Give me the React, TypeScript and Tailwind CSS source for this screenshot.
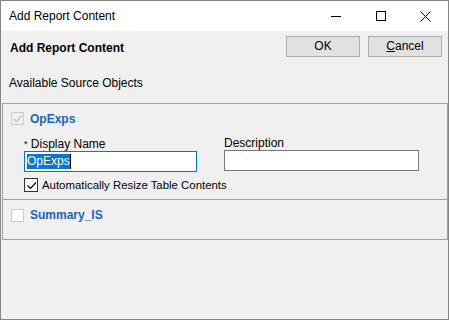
import React from "react";

const font = { fontFamily: '"Liberation Sans", Arial, sans-serif' };

const Check = ({ color }: { color: string }) => (
  <svg width="11" height="11" viewBox="0 0 11 11" fill="none">
    <path d="M1.5 5.5 L4.5 8.5 L10 2.5" stroke={color} strokeWidth="1.2" />
  </svg>
);

const App = () => {
  return (
    <div
      className="w-[449px] h-[320px] border border-[#858585] flex flex-col bg-[#f0f0f0] text-[12px] text-black overflow-hidden"
      style={font}
    >
      {/* title bar */}
      <div className="h-[30px] bg-white flex items-center">
        <div className="pl-[8px] flex-1 leading-[14px]">Add Report Content</div>
        <div className="flex h-full">
          <div className="w-[45px] flex items-center justify-center">
            <svg width="10" height="10" viewBox="0 0 10 10">
              <path d="M0 5.5 H10" stroke="#000" strokeWidth="1" />
            </svg>
          </div>
          <div className="w-[45px] flex items-center justify-center">
            <svg width="10" height="10" viewBox="0 0 10 10">
              <rect x="0.5" y="0.5" width="9" height="9" fill="none" stroke="#000" strokeWidth="1" />
            </svg>
          </div>
          <div className="w-[45px] flex items-center justify-center">
            <svg width="11" height="11" viewBox="0 0 11 11">
              <path d="M0.5 0.5 L10.5 10.5 M10.5 0.5 L0.5 10.5" stroke="#000" strokeWidth="1" />
            </svg>
          </div>
        </div>
      </div>

      {/* header */}
      <div className="flex items-start pt-[5px] pr-[6px]">
        <div className="flex-1 pl-[9px] pt-[5px] leading-[14px] font-bold">Add Report Content</div>
        <div className="flex gap-[8px]">
          <button className="w-[74px] h-[21px] bg-[#e1e1e1] border border-[#adadad] leading-[19px] text-center">
            OK
          </button>
          <button className="w-[74px] h-[21px] bg-[#e1e1e1] border border-[#adadad] leading-[19px] text-center">
            <span className="underline">C</span>ancel
          </button>
        </div>
      </div>

      <div className="pl-[8px] mt-[19px] leading-[14px]">Available Source Objects</div>

      {/* source objects panel */}
      <div className="ml-[1px] mt-[13px] h-[137px] border border-[#a0a0a0] flex flex-col">
        <div className="h-[96px] border-b border-[#a0a0a0] pt-[8px] flex flex-col">
          <div className="flex items-center h-[13px] pl-[8px]">
            <div className="w-[13px] h-[13px] border border-[#cccccc] bg-[#f0f0f0] flex items-center justify-center">
              <Check color="#c4c4c4" />
            </div>
            <span className="ml-[6px] font-bold text-[#1565c0] leading-[14px]">OpExps</span>
          </div>

          <div className="flex mt-[11px] pl-[21px]">
            <div className="w-[173px] mt-[1px] flex flex-col">
              <div className="leading-[14px]">
                <span className="text-[9px] align-top">*</span> Display Name
              </div>
              <div className="h-[21px] border border-[#0078d7] bg-white flex items-center pl-[2px]">
                <span className="bg-[#0078d7] text-white leading-[15px]">OpExps</span>
                <span className="w-[1px] h-[15px] bg-black" />
              </div>
            </div>
            <div className="w-[195px] ml-[27px] flex flex-col">
              <div className="leading-[14px]">Description</div>
              <div className="h-[21px] border border-[#7a7a7a] bg-white" />
            </div>
          </div>

          <div className="flex items-center mt-[6px] pl-[21px] h-[14px]">
            <div className="w-[14px] h-[14px] border border-[#333333] bg-white flex items-center justify-center">
              <Check color="#000" />
            </div>
            <span className="ml-[4px] text-[11.4px] leading-[14px]">Automatically Resize Table Contents</span>
          </div>
        </div>

        <div className="pt-[8px] pl-[8px] flex items-center">
          <div className="w-[13px] h-[13px] border border-[#cccccc] bg-white" />
          <span className="ml-[6px] font-bold text-[#1565c0] leading-[14px]">Summary_IS</span>
        </div>
      </div>
    </div>
  );
};

export default App;
